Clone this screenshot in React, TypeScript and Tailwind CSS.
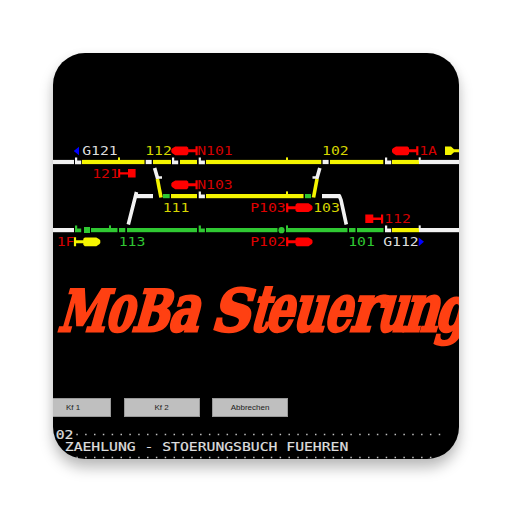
const Y = "#f5f500";
const W = "#f2f2f2";
const G = "#2fc832";
const R = "#ff0000";

type Segment = [number, number, string];

const topTrack: Segment[] = [
  [53, 74, W], [82, 144.5, Y], [145.7, 151.7, W], [153, 171, Y], [180, 197, Y],
  [206, 321.3, Y], [322.6, 328.6, W], [330, 383.3, Y], [392, 419, Y], [419, 459, W],
];
const midTrack: Segment[] = [
  [136, 153, W], [163, 169.7, G], [171, 197, Y], [206, 303.5, Y], [305, 311, G], [322, 340, W],
];
const lowTrack: Segment[] = [
  [53, 74, W], [91, 117.5, G], [119, 125.3, G], [127, 197, G], [206, 277.5, G],
  [286, 347.5, G], [349, 355.5, G], [357, 383.5, G], [392, 419, Y], [419, 459, W],
];

const Track = ({ y, segments }: { y: number; segments: Segment[] }) => (
  <g>
    {segments.map(([a, b, fill]) => (
      <rect key={a} x={a} y={y} width={b - a} height={4.2} fill={fill} />
    ))}
  </g>
);

const Post = ({ x, y, fill = W }: { x: number; y: number; fill?: string }) => (
  <path d={`M${x} ${y - 2.6}h2.2v3h4v3.9h-6.2z`} fill={fill} />
);

const Tick = ({ x, y, fill }: { x: number; y: number; fill: string }) => (
  <rect x={x} y={y - 2.6} width={2} height={4} fill={fill} />
);

/* Main signal: rounded head, stem and foot; flip points the head to the right. */
const Signal = ({ x, y, fill = R, flip = false }: { x: number; y: number; fill?: string; flip?: boolean }) => (
  <g transform={`translate(${x} ${y}) scale(${flip ? -1 : 1} 1)`} fill={fill}>
    <path d="M0 -1.2L1-2.5L4-4.4H15.5L17-3V-1.5H24.2V-4.5H26.4V4.5H24.2V1.5H17V3L15.5 4.4H4L1 2.5L0 1.2Z" />
  </g>
);

const Label = ({ x, y, fill, children }: { x: number; y: number; fill: string; children: string }) => (
  <text
    x={x - 0.8}
    y={y}
    fill={fill}
    textLength={children.length * 8.9}
    lengthAdjust="spacingAndGlyphs"
  >
    {children}
  </text>
);

/* glyph, left edge, width, font size */
const titleGlyphs: [string, number, number, number][] = [
  ["M", 57, 48, 57], ["o", 104, 28, 66], ["B", 131, 37, 57], ["a", 167, 31, 66],
  ["S", 210, 39, 58], ["t", 249, 18, 64], ["e", 264, 28, 66], ["u", 291, 33, 66], ["e", 323, 27, 66],
  ["r", 349, 28, 66], ["u", 375, 30, 66], ["n", 402, 35, 66], ["g", 434, 32, 62],
];

const Key = ({ children }: { children: string }) => (
  <div className="flex h-[19px] w-[76px] items-center justify-center border border-[#999] bg-[#bfbfbf] text-[8px] text-[#222]">
    {children}
  </div>
);

export default function App() {
  return (
    <main className="flex h-[512px] w-[512px] items-start bg-white pt-[53px] pl-[53px]">
      <section className="flex h-[406px] w-[406px] flex-col overflow-hidden rounded-[32px] bg-black shadow-[0_9px_14px_rgba(0,0,0,0.26),0_0_10px_rgba(0,0,0,0.04)]">
        <svg
          className="mt-[87px] h-[115px] w-[406px] shrink-0 font-['DejaVu_Sans_Mono',monospace] text-[11.8px]"
          viewBox="53 140 406 115"
        >
          <Track y={159.9} segments={topTrack} />
          <Track y={194} segments={midTrack} />
          <Track y={228} segments={lowTrack} />
          <Post x={75} y={160} />
          <Post x={172} y={160} />
          <Post x={198.7} y={160} />
          <Post x={385} y={160} />
          <Post x={198.7} y={194} />
          <Post x={75} y={228} fill={G} />
          <Post x={198.7} y={228} fill={G} />
          <Post x={385} y={228} />
          <Tick x={118} y={160} fill={Y} />
          <Tick x={286} y={160} fill={Y} />
          <Tick x={418.7} y={160} fill={W} />
          <Tick x={286} y={194} fill={Y} />
          <Tick x={109} y={228} fill={G} />
          <Tick x={286} y={228} fill={G} />
          <Tick x={418.7} y={228} fill={W} />
          <rect x={84} y={227} width={6} height={6} fill={G} />
          <circle cx={281.5} cy={230.2} r={3.1} fill={G} />

          <g fill="none" strokeWidth={3.6}>
            <path d="M128.3 224.5L135 198L136.5 192" stroke={W} />
            <path d="M339 195L341 200L346.3 224.5" stroke={W} />
            <path d="M154.6 168L157.8 179" stroke={W} />
            <path d="M157 177.5h5" stroke={W} strokeWidth={2.6} />
            <path d="M157.4 179L161 197.5" stroke={Y} />
            <path d="M319.8 168L316.7 179" stroke={W} />
            <path d="M317.5 177.5h-5" stroke={W} strokeWidth={2.6} />
            <path d="M317 179L313.5 197.5" stroke={Y} />
          </g>

          <path d="M73.7 151L79 146.8V155.2Z M424 241.8L418.7 237.4V246.2Z" fill="#0000ff" />
          <Signal x={171.3} y={150.8} />
          <Signal x={171.3} y={184.8} />
          <Signal x={392} y={150.8} />
          <Signal x={312.5} y={207.7} flip />
          <Signal x={312.5} y={241.8} flip />
          <Signal x={100.3} y={241.8} flip fill={Y} />
          <path d="M445 146.5h6l3 2.8h5v3h-5l-3 2.8h-6z" fill={Y} />
          <path d="M118.2 169h2v3.3h7.8v-3.3h7.6v8.6H128v-3.2h-7.8v3.2h-2z" fill={R} />
          <path d="M365.3 214.5h8v3h7.7v-3h2.2v9H381v-3.4h-7.7v3h-8z" fill={R} />

          <Label x={83} y={155.2} fill="#dedede">G121</Label>
          <Label x={146} y={155.2} fill="#d6d600">112</Label>
          <Label x={198} y={155.2} fill="#d40000">N101</Label>
          <Label x={322.8} y={155.2} fill="#d6d600">102</Label>
          <Label x={420} y={155.2} fill="#d40000">1A</Label>
          <Label x={93} y={177.8} fill="#d40000">121</Label>
          <Label x={198} y={189.2} fill="#d40000">N103</Label>
          <Label x={163.5} y={212} fill="#d6d600">111</Label>
          <Label x={251} y={212} fill="#e00000">P103</Label>
          <Label x={314} y={212} fill="#d6d600">103</Label>
          <Label x={385} y={223.2} fill="#d40000">112</Label>
          <Label x={57.5} y={246} fill="#d40000">1F</Label>
          <Label x={119.5} y={246} fill={G}>113</Label>
          <Label x={251} y={246} fill="#e00000">P102</Label>
          <Label x={349} y={246} fill={G}>101</Label>
          <Label x={384} y={246} fill="#dedede">G112</Label>
        </svg>

        <svg
          className="mt-[25px] h-[70px] w-[406px] shrink-0 font-['DejaVu_Serif',serif] font-bold"
          viewBox="53 280 406 70"
        >
          <text
            transform="translate(0 331.3) skewX(-16)"
            fill="#ff4012"
            stroke="#ff4012"
            strokeWidth={2.8}
          >
            {titleGlyphs.map(([glyph, x, width, size], i) => (
              <tspan key={i} x={x} fontSize={size} textLength={width} lengthAdjust="spacingAndGlyphs">{glyph}</tspan>
            ))}
          </text>
        </svg>

        <div className="mt-[48px] -ml-[18px] flex shrink-0 gap-[12.5px] font-['Liberation_Sans',sans-serif]">
          <Key>Kf 1</Key>
          <Key>Kf 2</Key>
          <Key>Abbrechen</Key>
        </div>

        <svg
          className="mt-[8px] h-[34px] w-[406px] shrink-0 font-['DejaVu_Sans_Mono',monospace] text-[12px]"
          viewBox="53 425 406 34"
        >
          <g fill="#dedede" stroke="#dedede" strokeWidth={0.2}>
            <text x={55.7} y={439.3} textLength={17.7} lengthAdjust="spacingAndGlyphs">02</text>
            <text x={64.8} y={450.8} textLength={283.5} lengthAdjust="spacingAndGlyphs">
              ZAEHLUNG - STOERUNGSBUCH FUEHREN
            </text>
          </g>
          <g stroke="#c0c0c0" strokeWidth={1.5} strokeDasharray="1.5 7.34">
            <path d="M76.3 434.6H443" />
            <path d="M76.3 457.6H433" />
          </g>
        </svg>
      </section>
    </main>
  );
}
